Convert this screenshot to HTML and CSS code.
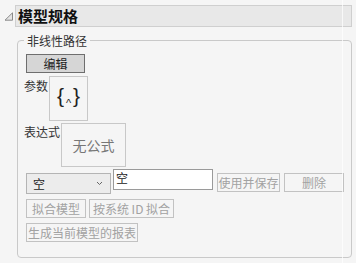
FILE: index.html
```html
<!DOCTYPE html>
<html lang="zh">
<head>
<meta charset="utf-8">
<link rel="stylesheet" href="styles.css">
</head>
<body>
<div class="page">
  <div class="outline-head">
    <svg class="disclosure" width="10" height="9" viewBox="0 0 10 9"><path d="M8.5 0.8 L8.5 8.2 L1 8.2 Z" fill="#e4e4e4" stroke="#8a8a8a" stroke-width="1"/></svg>
    <div class="title-bar"><span class="title">模型规格</span></div>
  </div>
  <fieldset class="group">
    <legend class="legend">非线性路径</legend>
    <div class="btn btn-edit">编辑</div>
    <div class="field-row row-params">
      <span class="label">参数</span>
      <div class="box box-params"><span class="braces">{<span class="caret">^</span>}</span></div>
    </div>
    <div class="field-row row-expr">
      <span class="label">表达式</span>
      <div class="box box-expr"><span class="noformula">无公式</span></div>
    </div>
    <div class="ctrl-row">
      <div class="select"><span>空</span><svg class="chev" width="7" height="5" viewBox="0 0 7 5"><path d="M1 1 L3.5 3.5 L6 1" fill="none" stroke="#666" stroke-width="1"/></svg></div>
      <div class="input">空</div>
      <div class="btn btn-dis btn-save">使用并保存</div>
      <div class="btn btn-dis btn-del">删除</div>
    </div>
    <div class="btn-row">
      <div class="btn btn-dis btn-fit">拟合模型</div>
      <div class="btn btn-dis btn-sysid">按系统 ID 拟合</div>
    </div>
    <div class="btn-row">
      <div class="btn btn-dis btn-report">生成当前模型的报表</div>
    </div>
  </fieldset>
  <div class="col-line"></div>
</div>
</body>
</html>
```

FILE: styles.css
```css
html, body {
  margin: 0;
  padding: 0;
}
body {
  width: 356px;
  height: 263px;
  background: #f5f5f5;
  font-family: "Noto Sans CJK SC", "Noto Sans", sans-serif;
  font-size: 12px;
  color: #333;
  overflow: hidden;
}
.page {
  position: relative;
  height: 263px;
}
.outline-head {
  display: flex;
  align-items: center;
  padding-top: 5px;
  padding-left: 4px;
  padding-right: 4px;
}
.disclosure {
  flex: none;
  margin-right: 1px;
}
.title-bar {
  flex: 1;
  height: 20px;
  background: #e8e8e8;
  border: 1px solid #cfcfcf;
  display: flex;
  align-items: center;
  padding-left: 2px;
}
.title {
  font-size: 15px;
  font-weight: bold;
  color: #111;
  line-height: 20px;
}
.group {
  margin: 7px 4px 0 17px;
  padding: 7px 6px 15px 6px;
  border: 1px solid #c9c9c9;
  border-radius: 4px;
  min-width: 0;
}
.legend {
  padding: 0 3px;
  margin-left: 0;
  font-size: 12px;
  line-height: 13px;
  color: #333;
}
.btn {
  display: flex;
  align-items: center;
  justify-content: center;
  box-sizing: border-box;
  font-size: 12px;
  line-height: 14px;
  white-space: nowrap;
}
.btn-edit {
  margin-left: 2px;
  width: 59px;
  height: 19px;
  background: #d6d6d6;
  border: 1px solid #6e6e6e;
  color: #222;
}
.field-row {
  display: flex;
  align-items: flex-start;
}
.label {
  line-height: 14px;
  color: #333;
}
.row-params {
  margin-top: 3px;
}
.row-params .label {
  margin-top: 3px;
  margin-right: 1px;
}
.box {
  box-sizing: border-box;
  border: 1px solid #c8c8c8;
  display: flex;
  align-items: center;
  justify-content: center;
}
.box-params {
  width: 39px;
  height: 45px;
}
.braces {
  font-family: "Liberation Sans", sans-serif;
  font-size: 21px;
  color: #222;
  line-height: 24px;
  margin-left: 0;
  margin-top: 1px;
}
.caret {
  font-size: 11px;
  vertical-align: -4px;
  margin: 0 2px;
}
.row-expr {
  margin-top: 2px;
}
.row-expr .label {
  margin-top: 2px;
  margin-right: 1px;
}
.box-expr {
  width: 65px;
  height: 44px;
}
.noformula {
  font-size: 14px;
  color: #777;
}
.ctrl-row {
  display: flex;
  align-items: flex-start;
  margin-top: 2px;
  margin-left: 2px;
}
.select {
  margin-top: 4px;
  width: 85px;
  height: 21px;
  box-sizing: border-box;
  background: #ececec;
  border: 1px solid #b4b4b4;
  display: flex;
  align-items: center;
  justify-content: space-between;
  padding: 0 7px 0 6px;
  color: #222;
}
.chev {
  flex: none;
}
.input {
  margin-left: 2px;
  width: 100px;
  height: 21px;
  box-sizing: border-box;
  background: #fff;
  border: 1px solid #9a9a9a;
  padding: 0 2px;
  line-height: 15px;
  color: #222;
}
.btn-dis {
  border: 1px solid #c2c2c2;
  color: #a2a2a2;
  background: transparent;
  height: 19px;
}
.btn-save {
  margin-top: 4px;
  margin-left: 4px;
  width: 63px;
}
.btn-del {
  margin-top: 4px;
  margin-left: 4px;
  width: 60px;
}
.btn-row {
  display: flex;
  margin-left: 2px;
  margin-top: 5px;
  gap: 3px;
}
.btn-fit {
  width: 60px;
}
.btn-sysid {
  width: 85px;
}
.btn-report {
  width: 112px;
}
.col-line {
  position: absolute;
  left: 342px;
  top: 0;
  width: 1px;
  height: 263px;
  background: rgba(255, 255, 255, 0.7);
}
```
